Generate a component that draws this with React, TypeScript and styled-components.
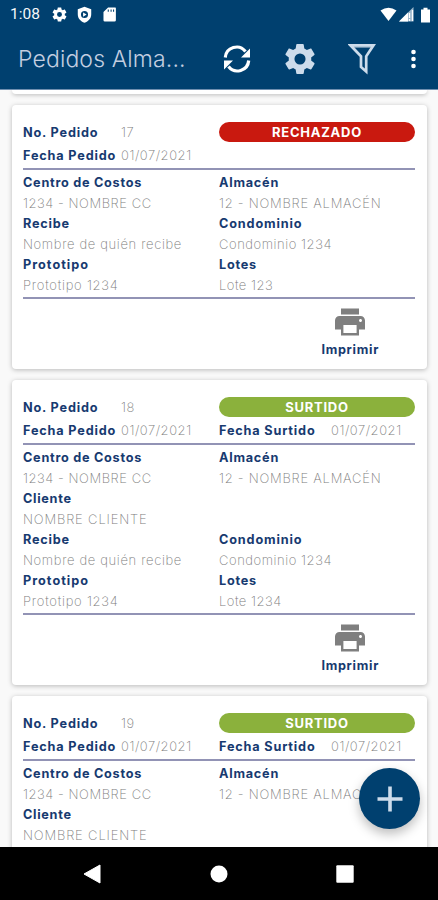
import React from "react";
import styled, { createGlobalStyle } from "styled-components";

const Global = createGlobalStyle`
  * { box-sizing: border-box; }
  body { margin: 0; background: #fafafa; font-family: Inter, "Open Sans", sans-serif; overflow: hidden; }
`;

const Screen = styled.div`
  width: 438px;
  height: 900px;
  display: flex;
  flex-direction: column;
  background: #f9f9f9;
`;
const Header = styled.header`
  height: 90px;
  flex: none;
  background: #00406f;
  border-bottom: 1px solid #6f8fb0;
`;
const StatusBar = styled.div`
  height: 29px;
  display: flex;
  align-items: center;
  padding: 0 6px 0 10px;
  color: #f4f7fa;
`;
const Clock = styled.span`
  width: 41px;
  font: 400 15.5px/29px Roboto, sans-serif;
`;
const StatusIcons = styled.div<{ $gap: number; $push?: boolean }>`
  display: flex;
  align-items: center;
  gap: ${(p) => p.$gap}px;
  margin-left: ${(p) => (p.$push ? "auto" : "0")};
  svg { display: block; }
`;
const Toolbar = styled.div`
  height: 59px;
  display: flex;
  align-items: center;
  padding: 0 17px 0 18px;
`;
const Title = styled.h1`
  margin: 0;
  width: 204px;
  font-size: 23px;
  line-height: 60px;
  font-weight: 300;
  letter-spacing: 0.13px;
  color: #c3cee0;
  white-space: nowrap;
`;
const Actions = styled.div`
  flex: 1;
  display: flex;
  align-items: center;
  justify-content: space-between;
  color: #cddceb;
  svg { display: block; }
`;
const List = styled.main`
  flex: 1;
  min-height: 0;
  overflow: hidden;
  padding: 0 11px 0 12px;
  display: flex;
  flex-direction: column;
  gap: 11px;
`;
const Card = styled.article<{ $height: number }>`
  flex: none;
  height: ${(p) => p.$height}px;
  padding: 17px 12px 0 11px;
  background: #fff;
  border-radius: 4px;
  box-shadow: 0 1px 5px rgba(0, 0, 0, 0.26);
`;
const CardEnd = styled.div`
  flex: none;
  height: 4px;
  background: #fff;
  border-radius: 0 0 4px 4px;
  box-shadow: 0 1px 4px rgba(0, 0, 0, 0.26);
`;
const Row = styled.div<{ $height: number }>`
  height: ${(p) => p.$height}px;
  display: grid;
  grid-template-columns: 196px 196px;
  align-items: center;
`;
const Pair = styled.div<{ $label: number }>`
  display: grid;
  grid-template-columns: ${(p) => p.$label}px 1fr;
`;
const Label = styled.span<{ $track?: number }>`
  padding-top: 1px;
  font-size: 12.7px;
  line-height: 20px;
  font-weight: 700;
  letter-spacing: ${(p) => p.$track ?? 0.75}px;
  color: #173a70;
  white-space: nowrap;
`;
const Value = styled.span<{ $track?: number }>`
  font-size: 13px;
  line-height: 20px;
  font-weight: 200;
  letter-spacing: ${(p) => p.$track ?? 0.55}px;
  color: #7c7c7c;
  white-space: nowrap;
`;
const Pill = styled.div<{ $color: string }>`
  height: 20px;
  margin-bottom: 1px;
  border-radius: 10px;
  background: ${(p) => p.$color};
  color: #fff;
  font-size: 13px;
  line-height: 20px;
  font-weight: 700;
  letter-spacing: 0.75px;
  text-align: center;
`;
const Rule = styled.div`
  height: 2px;
  background: #9293b5;
`;
const Details = styled.div`
  padding: 2px 0;
`;
const Footer = styled.div`
  display: flex;
  justify-content: flex-end;
  padding: 5px 36px 0 0;
`;
const Print = styled.div`
  display: flex;
  flex-direction: column;
  align-items: center;
  svg { display: block; margin-bottom: -1px; }
`;
const NavBar = styled.nav`
  height: 53px;
  flex: none;
  background: #000;
  display: flex;
  align-items: center;
  justify-content: space-between;
  padding: 0 84px 0 83px;
  svg { display: block; }
`;
const Fab = styled.button`
  position: absolute;
  left: 359px;
  top: 768px;
  width: 61px;
  height: 61px;
  padding: 0;
  border: 0;
  border-radius: 50%;
  background: #00406f;
  box-shadow: 0 5px 11px rgba(0, 0, 0, 0.26);
  display: flex;
  align-items: center;
  justify-content: center;
`;

const GEAR =
  "M19.43 12.98c.04-.32.07-.64.07-.98s-.03-.66-.07-.98l2.11-1.65c.19-.15.24-.42.12-.64l-2-3.46c-.12-.22-.39-.3-.61-.22l-2.49 1c-.52-.4-1.08-.73-1.69-.98l-.38-2.65C14.46 2.18 14.25 2 14 2h-4c-.25 0-.46.18-.49.42l-.38 2.65c-.61.25-1.17.59-1.69.98l-2.49-1c-.23-.09-.49 0-.61.22l-2 3.46c-.13.22-.07.49.12.64l2.11 1.65c-.04.32-.07.65-.07.98s.03.66.07.98l-2.11 1.65c-.19.15-.24.42-.12.64l2 3.46c.12.22.39.3.61.22l2.49-1c.52.4 1.08.73 1.69.98l.38 2.65c.03.24.24.42.49.42h4c.25 0 .46-.18.49-.42l.38-2.65c.61-.25 1.17-.59 1.69-.98l2.49 1c.23.09.49 0 .61-.22l2-3.46c.12-.22.07-.49-.12-.64l-2.11-1.65z";

const Printer = () => (
  <svg width="36" height="36" viewBox="0 0 24 24" fill="#7f7f7f">
    <path d="M19 8H5c-1.66 0-3 1.34-3 3v6h4v4h12v-4h4v-6c0-1.66-1.34-3-3-3zm-2.600 11.300H7.600v-5.300h8.800v5.300zm2.600-7.300c-.55 0-1-.45-1-1s.45-1 1-1 1 .45 1 1-.45 1-1 1zm-1-9H6v4h12V3z" />
  </svg>
);

type Field = { label: string; value: string; lt?: number; vt?: number };
type Order = {
  id: string;
  status: string;
  color: string;
  filled?: boolean;
  height: number;
  partial?: boolean;
  fields: [Field, Field | null][];
};

const costs: [Field, Field] = [
  { label: "Centro de Costos", value: "1234 - NOMBRE CC", lt: 0.73 },
  { label: "Almacén", value: "12 - NOMBRE ALMACÉN", lt: 0.75, vt: 0.75 },
];
const client: [Field, null] = [{ label: "Cliente", value: "NOMBRE CLIENTE", lt: 0.7, vt: 0.84 }, null];
const rest = (lot: string): [Field, Field][] => [
  [
    { label: "Recibe", value: "Nombre de quién recibe", vt: 0.65 },
    { label: "Condominio", value: "Condominio 1234", lt: 0.85 },
  ],
  [
    { label: "Prototipo", value: "Prototipo 1234", lt: 1, vt: 0.76 },
    { label: "Lotes", value: lot, vt: 0.5 },
  ],
];

const orders: Order[] = [
  { id: "17", status: "RECHAZADO", color: "#c9190f", height: 264, fields: [costs, ...rest("Lote 123")] },
  { id: "18", status: "SURTIDO", color: "#8bb13c", filled: true, height: 305, fields: [costs, client, ...rest("Lote 1234")] },
  { id: "19", status: "SURTIDO", color: "#8bb13c", filled: true, height: 305, partial: true, fields: [costs, client] },
];

const OrderCard = ({ order }: { order: Order }) => (
  <Card $height={order.height}>
    <Row $height={21}>
      <Pair $label={98}>
        <Label $track={0.82}>No. Pedido</Label>
        <Value>{order.id}</Value>
      </Pair>
      <Pill $color={order.color}>{order.status}</Pill>
    </Row>
    <Row $height={25}>
      <Pair $label={98}>
        <Label $track={0.83}>Fecha Pedido</Label>
        <Value>01/07/2021</Value>
      </Pair>
      {order.filled && (
        <Pair $label={112}>
          <Label $track={0.82}>Fecha Surtido</Label>
          <Value>01/07/2021</Value>
        </Pair>
      )}
    </Row>
    <Rule />
    <Details>
      {order.fields.map(([a, b], i) => (
        <React.Fragment key={i}>
          <Row $height={20.5}>
            <Label $track={a.lt}>{a.label}</Label>
            {b && <Label $track={b.lt}>{b.label}</Label>}
          </Row>
          <Row $height={20.5}>
            <Value $track={a.vt}>{a.value}</Value>
            {b && <Value $track={b.vt}>{b.value}</Value>}
          </Row>
        </React.Fragment>
      ))}
    </Details>
    {!order.partial && (
      <>
        <Rule />
        <Footer>
          <Print>
            <Printer />
            <Label $track={0.7}>Imprimir</Label>
          </Print>
        </Footer>
      </>
    )}
  </Card>
);

export default function App() {
  return (
    <Screen>
      <Global />
      <Header>
        <StatusBar>
          <Clock>1:08</Clock>
          <StatusIcons $gap={8}>
            <svg width="17" height="17" viewBox="0 0 24 24" fill="#fff" fillRule="evenodd">
              <path d={GEAR + "M12 15.500a3.500 3.500 0 1 1 0-7 3.500 3.500 0 0 1 0 7z"} />
            </svg>
            <svg width="17" height="17" viewBox="0 0 24 24" fill="#fff" fillRule="evenodd">
              <path d="M12 1L2.500 4.500v7C2.500 17.500 6.500 21.500 12 23.500c5.500-2 9.500-6 9.500-12v-7zM12 7a5 5 0 1 1 0 10 5 5 0 0 1 0-10zM10 9v6l5-3z" />
            </svg>
            <svg width="17" height="17" viewBox="0 0 24 24" fill="#fff">
              <path d="M20.500 2H10L3.500 8.500V20a2 2 0 0 0 2 2h13.500a2 2 0 0 0 2-2V3zM9.500 5h1.500v3H9.500zm4 0h1.500v3h-1.500zm3.500 0h1.500v3H17z" fillRule="evenodd" />
            </svg>
          </StatusIcons>
          <StatusIcons $gap={2} $push>
            <svg width="17" height="15" viewBox="0 0 17 15" fill="#fff">
              <path d="M.5 3.500Q8.500-1.800 16.500 3.500L8.500 14z" />
            </svg>
            <svg width="15" height="15" viewBox="0 0 15 15">
              <path d="M0 14.500L14.500 0v14.500z" fill="#9db8cd" />
              <path d="M0 14.500L9 5.500v9z" fill="#fff" />
              <path d="M10.500 6v5M10.500 12v2M13.500 3v11" stroke="#fff" strokeWidth="1.300" />
            </svg>
            <svg width="16" height="16" viewBox="0 0 16 16" fill="#fff">
              <path d="M5 2.500h2.500V.7h4v1.800H14V15.500H5z" />
            </svg>
          </StatusIcons>
        </StatusBar>
        <Toolbar>
          <Title>Pedidos Alma...</Title>
          <Actions>
            <svg width="30" height="28" viewBox="0 0 30 28" fill="none" stroke="#fff" strokeWidth="3.200">
              <path d="M3.300 12.500A11.300 11.300 0 0 1 23.500 6.500M26.700 15.500A11.300 11.300 0 0 1 6.500 21.500" />
              <path d="M28 3.500v9h-9zM2 24.500v-9h9z" fill="#fff" stroke="none" />
            </svg>
            <svg width="36" height="36" viewBox="0 0 24 24" fill="#cddceb" fillRule="evenodd">
              <path d={GEAR + "M12 15.700a3.700 3.700 0 1 1 0-7.400 3.700 3.700 0 0 1 0 7.400z"} />
            </svg>
            <svg width="28" height="32" viewBox="0 0 28 32" fill="none" stroke="#cddceb" strokeWidth="2.700">
              <path d="M2.500 2.300h23l-7.300 11V28.500l-5.200-4.500V13.300z" />
              <path d="M4 4h20" strokeWidth="1" />
            </svg>
            <svg width="15" height="20" viewBox="0 0 15 20" fill="#fff">
              <circle cx="7.500" cy="3" r="2.300" />
              <circle cx="7.500" cy="10" r="2.300" />
              <circle cx="7.500" cy="17" r="2.300" />
            </svg>
          </Actions>
        </Toolbar>
      </Header>
      <List>
        <CardEnd />
        {orders.map((o) => (
          <OrderCard key={o.id} order={o} />
        ))}
      </List>
      <NavBar>
        <svg width="18" height="20" viewBox="0 0 18 20" fill="#fff">
          <path d="M17 1v18L1 10z" stroke="#fff" strokeLinejoin="round" />
        </svg>
        <svg width="18" height="18" viewBox="0 0 18 18" fill="#fff">
          <circle cx="9" cy="9" r="8.500" />
        </svg>
        <svg width="18" height="18" viewBox="0 0 18 18" fill="#fff">
          <rect x=".3" y=".3" width="17.400" height="17.400" rx="1" />
        </svg>
      </NavBar>
      <Fab aria-label="Agregar">
        <svg width="26" height="26" viewBox="0 0 26 26" stroke="#cddceb" strokeWidth="3.600">
          <path d="M13 .5v25M.5 13h25" />
        </svg>
      </Fab>
    </Screen>
  );
}
